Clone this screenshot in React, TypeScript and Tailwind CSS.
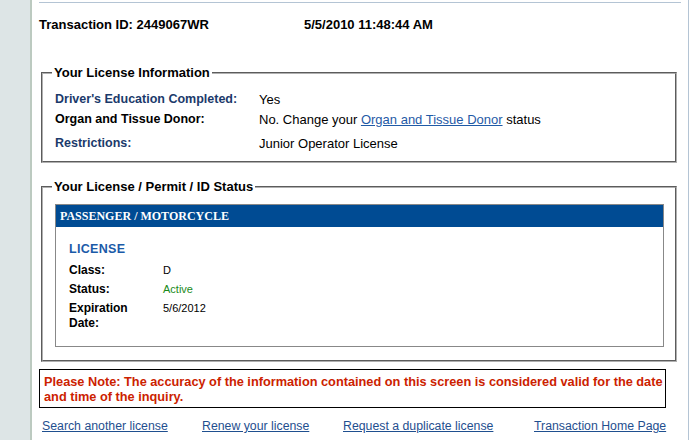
import React from "react";

const font = { fontFamily: '"Liberation Sans", Arial, sans-serif' };

function InfoRow({ label, value, blue }: { label: string; value: React.ReactNode; blue?: boolean }) {
  return (
    <div className="flex leading-[15px]">
      <div className={`w-[204px] shrink-0 font-bold text-[12.5px] ${blue ? "text-[#1b3a6b]" : "text-black"}`}>{label}</div>
      <div className="text-[13px] text-black">{value}</div>
    </div>
  );
}

function StatusRow({ label, value, green }: { label: string; value: string; green?: boolean }) {
  return (
    <div className="flex leading-[15px]">
      <div className="w-[94px] shrink-0 pr-4 font-bold text-[12px] text-black">{label}</div>
      <div className={`text-[11px] ${green ? "text-[#1a8a1a]" : "text-black"}`}>{value}</div>
    </div>
  );
}

export default function App() {
  return (
    <div className="flex w-[693px] h-[440px] overflow-hidden bg-white" style={font}>
      {/* left rail */}
      <div className="w-[32px] shrink-0 bg-[#dde5e6] border-r-2 border-[#bccac0]" />

      <div className="w-[656px] shrink-0">
        <div className="mt-[2px] ml-[7px] w-[642px] h-px bg-[#b4c4d4]" />

        <div className="flex mt-[14px] ml-[7px] text-[13px] leading-[15px] font-bold text-black">
          <div className="w-[265px] shrink-0">Transaction ID: 2449067WR</div>
          <div>5/5/2010 11:48:44 AM</div>
        </div>

        {/* license information */}
        <fieldset className="mt-[33px] ml-[9px] w-[636px] border-2 border-[#b0b0b0] [border-style:groove] pl-[12px] pr-[11px] pb-[10px]">
          <legend className="px-[2px] -ml-[3px] text-[13px] leading-[15px] font-bold text-black">Your License Information</legend>
          <div className="flex flex-col pt-[12px]">
            <InfoRow label="Driver's Education Completed:" value="Yes" blue />
            <div className="mt-[5px]">
              <InfoRow
                label="Organ and Tissue Donor:"
                value={
                  <span>
                    No. Change your{" "}
                    <a href="#" className="text-[#1f5aa6] underline">
                      Organ and Tissue Donor
                    </a>{" "}
                    status
                  </span>
                }
              />
            </div>
            <div className="mt-[9px]">
              <InfoRow label="Restrictions:" value="Junior Operator License" blue />
            </div>
          </div>
        </fieldset>

        {/* status */}
        <fieldset className="mt-[16px] ml-[9px] w-[636px] border-2 border-[#b0b0b0] [border-style:groove] pl-[12px] pr-[11px] pb-[13px]">
          <legend className="px-[2px] -ml-[3px] text-[13px] leading-[15px] font-bold text-black">Your License / Permit / ID Status</legend>
          <div className="mt-[10px] border border-[#888]">
            <div
              className="h-[22px] bg-[#004b93] px-[4px] flex items-center text-white text-[12px] font-bold"
              style={{ fontFamily: '"Liberation Serif", "Times New Roman", serif' }}
            >
              PASSENGER / MOTORCYCLE
            </div>
            <div className="px-[13px] pt-[15px] pb-[15px]">
              <div className="text-[12.5px] leading-[15px] font-bold text-[#1b5aa8] tracking-[0.3px]">LICENSE</div>
              <div className="flex flex-col gap-[4px] mt-[6px]">
                <StatusRow label="Class:" value="D" />
                <StatusRow label="Status:" value="Active" green />
                <StatusRow label="Expiration Date:" value="5/6/2012" />
              </div>
            </div>
          </div>
        </fieldset>

        {/* note */}
        <div className="mt-[7px] ml-[7px] w-[627px] border border-black pl-[4px] pt-[4px] pb-[3px] text-[12.75px] leading-[15px] font-bold text-[#cc2200]">
          Please Note: The accuracy of the information contained on this screen is considered valid for the date and time of the inquiry.
        </div>

        <div className="flex mt-[11px] ml-[10px] text-[12.3px] leading-[15px] text-[#1f4f8f]">
          <a href="#" className="underline w-[160px] shrink-0">Search another license</a>
          <a href="#" className="underline w-[141px] shrink-0">Renew your license</a>
          <a href="#" className="underline w-[191px] shrink-0">Request a duplicate license</a>
          <a href="#" className="underline">Transaction Home Page</a>
        </div>
      </div>

      {/* right edge */}
      <div className="w-px shrink-0 bg-[#b4c4d4]" />
    </div>
  );
}
